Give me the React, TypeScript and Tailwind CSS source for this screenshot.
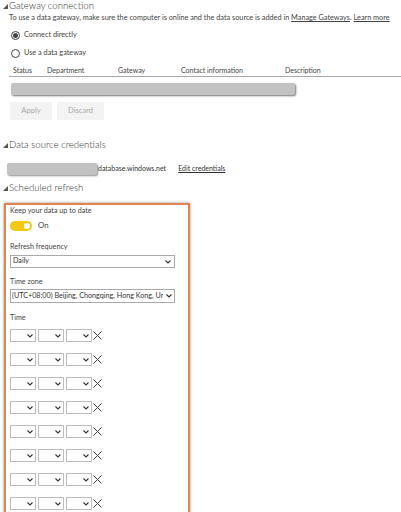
import React from "react";

const Tri = () => (
  <svg width="5" height="5" viewBox="0 0 5 5" className="shrink-0">
    <polygon points="5,0 5,5 0,5" fill="#555" />
  </svg>
);

const Chevron = () => (
  <svg width="6" height="4" viewBox="0 0 6 4">
    <polyline points="0.5,0.5 3,3 5.5,0.5" fill="none" stroke="#333" strokeWidth="1.1" />
  </svg>
);

const Heading = ({ text, className = "" }: { text: string; className?: string }) => (
  <div className={`flex items-center h-[12px] pl-[3px] gap-[1px] text-[9.6px] font-light text-[#333] leading-[12px] ${className}`}>
    <Tri />
    <span>{text}</span>
  </div>
);

const TimeSel = () => (
  <div className="w-[26px] h-[13px] border border-[#bdbdbd] flex items-center justify-end pr-[2px]">
    <Chevron />
  </div>
);

export default function App() {
  const rows = [0, 1, 2, 3, 4, 5, 6, 7];
  return (
    <div
      className="w-[401px] h-[512px] overflow-hidden bg-white text-[#444]"
      style={{ fontFamily: 'Lato, "Open Sans", sans-serif' }}
    >
      <Heading text="Gateway connection" />
      <div className="h-[12px] pl-[9px] text-[7.3px] leading-[12px] text-[#444] whitespace-nowrap">
        To use a data gateway, make sure the computer is online and the data source is added in{" "}
        <span className="underline">Manage Gateways</span>. <span className="underline">Learn more</span>
      </div>
      <div className="mt-[5px] h-[12px] pl-[11px] flex items-center gap-[4px] text-[7.3px]">
        <span className="w-[9px] h-[9px] rounded-full border border-[#444] flex items-center justify-center">
          <span className="w-[5px] h-[5px] rounded-full bg-[#444]" />
        </span>
        <span>Connect directly</span>
      </div>
      <div className="mt-[6px] h-[12px] pl-[11px] flex items-center gap-[4px] text-[7.3px]">
        <span className="w-[9px] h-[9px] rounded-full border border-[#444]" />
        <span>Use a data gateway</span>
      </div>
      <div className="mt-[5px] ml-[9px] h-[13px] border-b border-[#aaa] text-[7px] leading-[12px] text-[#444]">
        <div className="flex">
          <span className="w-[38px] pl-[4px]">Status</span>
          <span className="w-[71px]">Department</span>
          <span className="w-[63px]">Gateway</span>
          <span className="w-[104px]">Contact information</span>
          <span>Description</span>
        </div>
      </div>
      <div className="mt-[6px] ml-[11px] w-[284px] h-[12px] bg-[#c2c2c2] rounded-[2px] shadow-[1px_1px_2px_rgba(0,0,0,0.55)]" />
      <div className="mt-[7px] ml-[10px] flex gap-[5px] text-[7.6px] text-[#aaa]">
        <div className="w-[42px] h-[18px] bg-[#f3f3f3] flex items-center justify-center">Apply</div>
        <div className="w-[47px] h-[18px] bg-[#f3f3f3] flex items-center justify-center">Discard</div>
      </div>
      <Heading text="Data source credentials" className="mt-[19px]" />
      <div className="mt-[11px] ml-[7px] h-[13px] flex items-center text-[7px] text-[#333]">
        <div className="w-[90px] h-[12px] bg-[#c2c2c2] rounded-[2px] shadow-[1px_1px_2px_rgba(0,0,0,0.45)]" />
        <span className="ml-[1px]">database.windows.net</span>
        <span className="ml-[12px] underline">Edit credentials</span>
      </div>
      <Heading text="Scheduled refresh" className="mt-[7px]" />
      <div className="mt-[9px] ml-[4px] w-[186px] h-[330px] border-2 border-[#e2844f] shadow-[0_0_3px_rgba(0,0,0,0.4)] pl-[4px] text-[7.2px] text-[#444]">
        <div className="h-[12px] leading-[12px]">Keep your data up to date</div>
        <div className="mt-[4px] h-[10px] flex items-center gap-[6px]">
          <div className="w-[22px] h-[10px] rounded-full bg-[#f2c811] flex items-center justify-end pr-[2px]">
            <span className="w-[6px] h-[6px] rounded-full bg-white" />
          </div>
          <span className="text-[7.8px]">On</span>
        </div>
        <div className="mt-[10px] h-[12px] leading-[12px]">Refresh frequency</div>
        <div className="mt-[2px] w-[165px] h-[13px] border border-[#aaa] flex items-center justify-between pl-[2px] pr-[3px] text-[7.2px] text-[#333]">
          <span>Daily</span>
          <Chevron />
        </div>
        <div className="mt-[8px] h-[12px] leading-[12px]">Time zone</div>
        <div className="mt-[1px] w-[165px] h-[14px] border border-[#aaa] flex items-center justify-between pl-[1px] pr-[2px] text-[7.2px] text-[#333] overflow-hidden">
          <span className="whitespace-nowrap overflow-hidden">(UTC+08:00) Beijing, Chongqing, Hong Kong, Ur</span>
          <Chevron />
        </div>
        <div className="mt-[9px] h-[12px] leading-[12px]">Time</div>
        <div className="mt-[5px] flex flex-col gap-[11px]">
          {rows.map((r) => (
            <div key={r} className="flex items-center gap-[2px]">
              <TimeSel />
              <TimeSel />
              <TimeSel />
              <svg width="9" height="9" viewBox="0 0 9 9" className="-ml-[1px]">
                <path d="M0.5 0.5 L8.5 8.5 M8.5 0.5 L0.5 8.5" stroke="#444" strokeWidth="1" />
              </svg>
            </div>
          ))}
        </div>
      </div>
    </div>
  );
}
